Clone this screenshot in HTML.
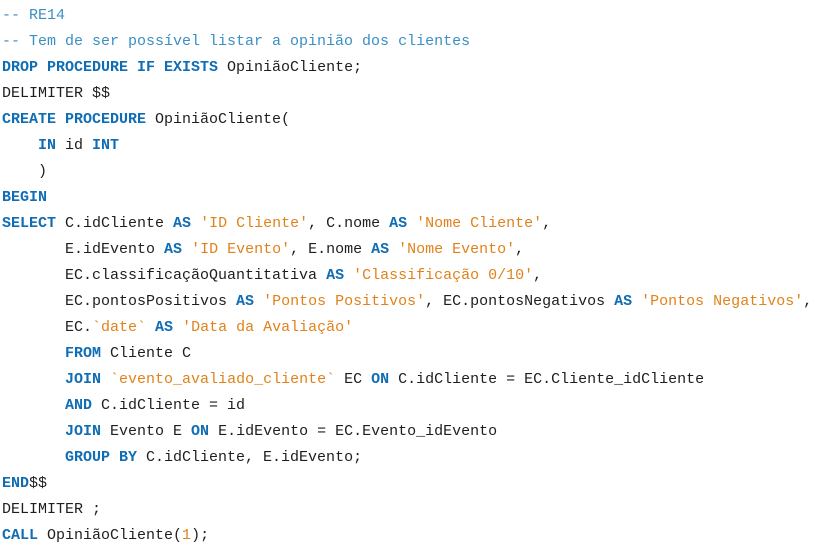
<!DOCTYPE html>
<html><head><meta charset="utf-8"><style>
body{margin:0;background:#fff;width:814px;height:551px;overflow:hidden}
pre{margin:0;position:absolute;left:2px;top:3px;font-family:"Liberation Mono",monospace;font-size:15px;line-height:26px;color:#1e1e1e}
.k{color:#0f6db5;font-weight:bold}
.s{color:#e0821a}
.c{color:#3a8fc4}
</style></head><body><pre><span class="c">-- RE14</span>
<span class="c">-- Tem de ser possível listar a opinião dos clientes</span>
<span class="k">DROP PROCEDURE IF EXISTS</span> OpiniãoCliente;
DELIMITER $$
<span class="k">CREATE PROCEDURE</span> OpiniãoCliente(
    <span class="k">IN</span> id <span class="k">INT</span>
    )
<span class="k">BEGIN</span>
<span class="k">SELECT</span> C.idCliente <span class="k">AS</span> <span class="s">'ID Cliente'</span>, C.nome <span class="k">AS</span> <span class="s">'Nome Cliente'</span>,
       E.idEvento <span class="k">AS</span> <span class="s">'ID Evento'</span>, E.nome <span class="k">AS</span> <span class="s">'Nome Evento'</span>,
       EC.classificaçãoQuantitativa <span class="k">AS</span> <span class="s">'Classificação 0/10'</span>,
       EC.pontosPositivos <span class="k">AS</span> <span class="s">'Pontos Positivos'</span>, EC.pontosNegativos <span class="k">AS</span> <span class="s">'Pontos Negativos'</span>,
       EC.<span class="s">`date`</span> <span class="k">AS</span> <span class="s">'Data da Avaliação'</span>
       <span class="k">FROM</span> Cliente C
       <span class="k">JOIN</span> <span class="s">`evento_avaliado_cliente`</span> EC <span class="k">ON</span> C.idCliente = EC.Cliente_idCliente
       <span class="k">AND</span> C.idCliente = id
       <span class="k">JOIN</span> Evento E <span class="k">ON</span> E.idEvento = EC.Evento_idEvento
       <span class="k">GROUP BY</span> C.idCliente, E.idEvento;
<span class="k">END</span>$$
DELIMITER ;
<span class="k">CALL</span> OpiniãoCliente(<span class="s">1</span>);</pre></body></html>
